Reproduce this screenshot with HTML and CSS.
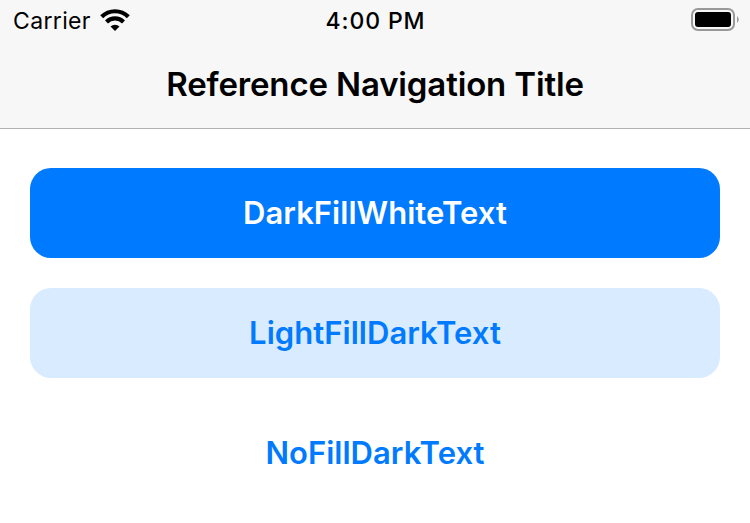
FILE: index.html
```html
<!DOCTYPE html>
<html lang="en">
<head>
<meta charset="utf-8">
<title>Reference Navigation Title</title>
<link rel="stylesheet" href="styles.css">
</head>
<body>
<header class="header">
  <div class="status">
    <div class="carrier"><span class="carrier-name">Carrier</span>
      <svg class="wifi" width="30" height="22" viewBox="0 0 30 22"><g fill="none" stroke="#000" stroke-width="4.200"><path d="M1.700 7.700a19 19 0 0 1 26.600 0"/><path d="M6.500 12.900a12.200 12.200 0 0 1 17 0"/></g><path d="M15 22l-4.500-4.400a6.500 6.500 0 0 1 9 0z"/></svg>
    </div>
    <time class="time">4:00 PM</time>
    <svg class="battery" width="50" height="24" viewBox="0 0 50 24"><rect x="2" y="1" width="42" height="21" rx="6" fill="none" stroke="#999" stroke-width="2"/><rect x="5" y="4" width="36" height="15" rx="3"/><path d="M47 8q3.500 3.500 0 7z" fill="#999"/></svg>
  </div>
  <h1 class="title">Reference Navigation Title</h1>
</header>
<main class="actions">
  <button class="btn filled"><span class="label">DarkFillWhiteText</span></button>
  <button class="btn tinted"><span class="label">LightFillDarkText</span></button>
  <button class="btn plain"><span class="label">NoFillDarkText</span></button>
</main>
</body>
</html>
```
FILE: styles.css
```css
* { box-sizing: border-box; }
body { margin: 0; background: #fff; font-family: Inter, "Liberation Sans", sans-serif; overflow: hidden; }
.header { height: 129px; background: #f7f7f7; border-bottom: 1px solid #b2b2b2; }
.status { height: 40px; display: grid; grid-template-columns: 1fr auto 1fr; align-items: center; padding: 0 10px 0 13px; }
.carrier { display: flex; align-items: center; gap: 9px; font-size: 23px; letter-spacing: 0.35px; padding-top: 1px; }
.wifi { margin-bottom: 2px; }
.time { font-size: 23px; font-weight: 500; letter-spacing: 0.9px; padding-top: 1px; margin-left: -2px; }
.battery { justify-self: end; }
.title { margin: 0; height: 88px; line-height: 88px; text-align: center; font-size: 33px; font-weight: 600; letter-spacing: -0.15px; }
.actions { display: grid; gap: 30px; padding: 39px 30px 0; }
.btn { height: 90px; border: 0; border-radius: 21px; padding: 0 0 1px; font: 600 31px Inter, sans-serif; letter-spacing: 0.03px; background: transparent; color: #007aff; }
.filled { background: #007aff; color: #fff; }
.tinted { background: #d9ebff; }
```
